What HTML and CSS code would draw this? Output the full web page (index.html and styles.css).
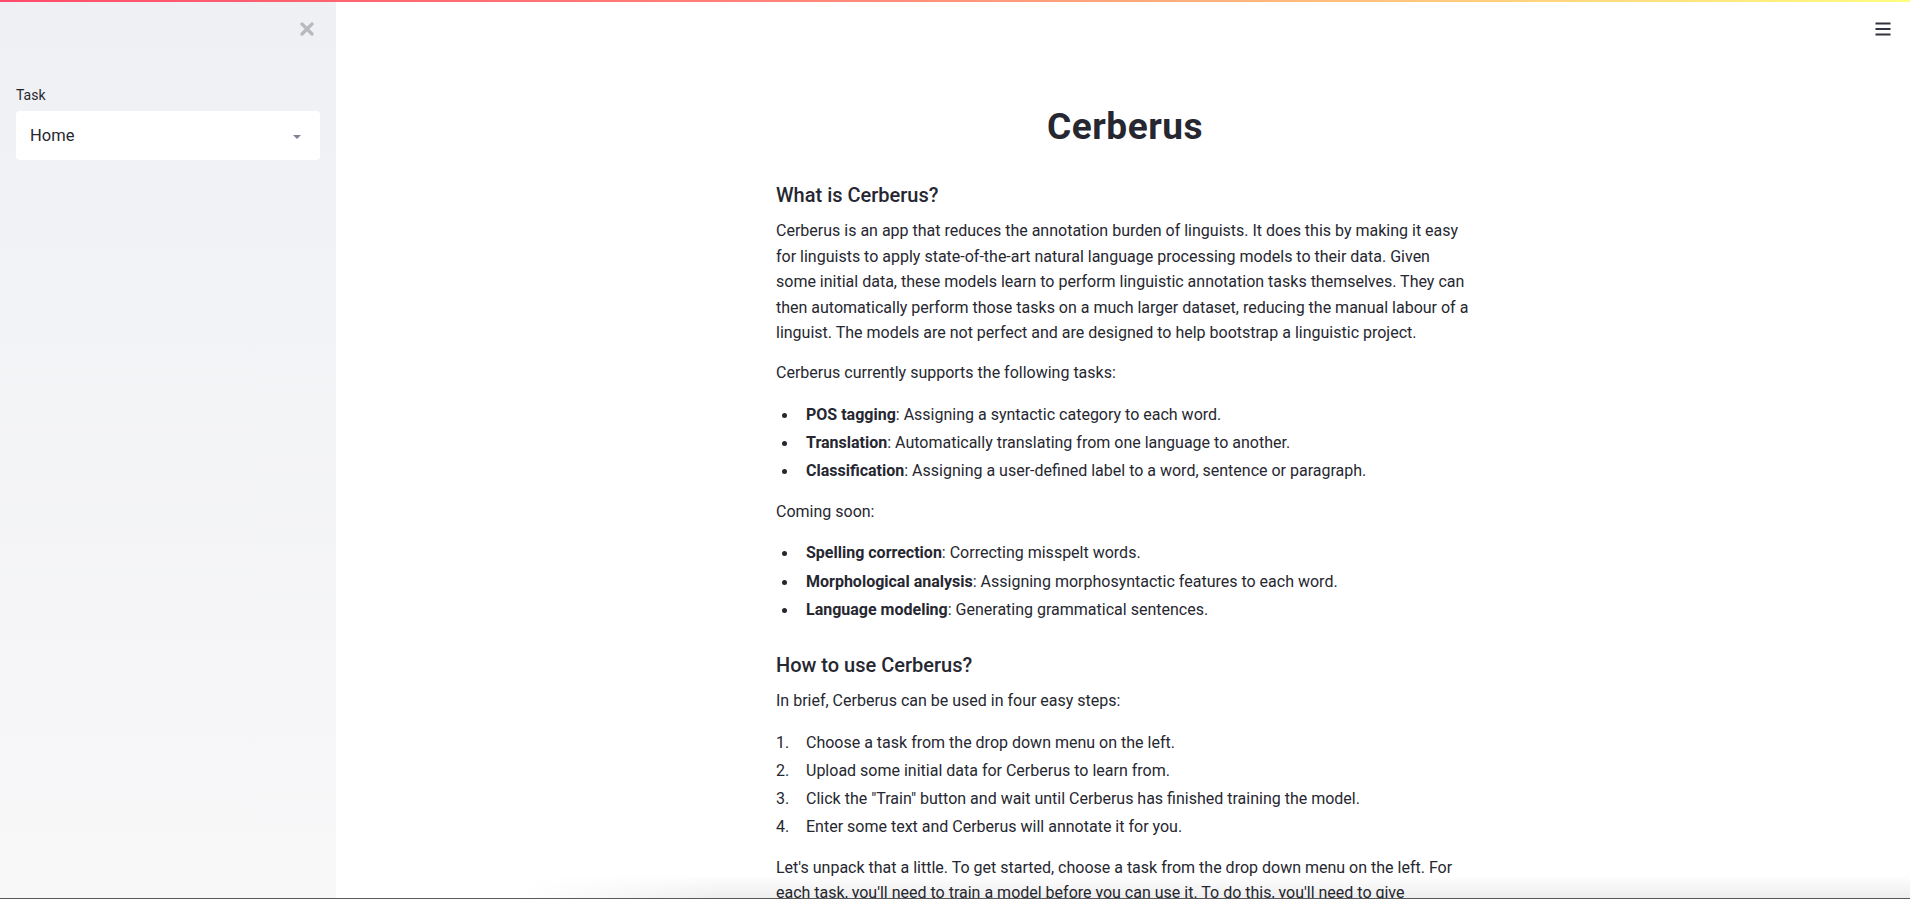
FILE: index.html
```html
<!DOCTYPE html>
<html lang="en">
<head>
<meta charset="utf-8">
<title>Cerberus</title>
<link rel="stylesheet" href="styles.css">
</head>
<body>
<div class="decoration"></div>
<div class="app">
  <aside class="sidebar">
    <div class="sidebar-top">
      <button class="close-btn" aria-label="Close sidebar">
        <svg width="14" height="14" viewBox="0 0 14 14"><path d="M2 2 L12 12 M12 2 L2 12" stroke="#b7b9bf" stroke-width="3.2" stroke-linecap="round"/></svg>
      </button>
    </div>
    <div class="widget">
      <label class="widget-label">Task</label>
      <div class="select">
        <span class="select-value">Home</span>
        <svg class="caret" width="10" height="6" viewBox="0 0 10 6"><path d="M1 1 L9 1 L5 5 Z" fill="#7f8290"/></svg>
      </div>
    </div>
  </aside>
  <main class="main">
    <div class="toolbar">
      <button class="menu-btn" aria-label="Main menu">
        <svg width="16" height="14" viewBox="0 0 16 14"><path d="M0.5 1.5 H15.5 M0.5 7 H15.5 M0.5 12.5 H15.5" stroke="#31333f" stroke-width="2"/></svg>
      </button>
    </div>
    <div class="block">
      <h1 class="title">Cerberus</h1>
      <h3 class="subhead">What is Cerberus?</h3>
      <p class="intro">Cerberus is an app that reduces the annotation burden of linguists. It does this by making it easy<br>
      for linguists to apply state-of-the-art natural language processing models to their data. Given<br>
      some initial data, these models learn to perform linguistic annotation tasks themselves. They can<br>
      then automatically perform those tasks on a much larger dataset, reducing the manual labour of a<br>
      linguist. The models are not perfect and are designed to help bootstrap a linguistic project.</p>
      <p>Cerberus currently supports the following tasks:</p>
      <ul class="bullets">
        <li><strong>POS tagging</strong>: Assigning a syntactic category to each word.</li>
        <li><strong>Translation</strong>: Automatically translating from one language to another.</li>
        <li><strong>Classification</strong>: Assigning a user-defined label to a word, sentence or paragraph.</li>
      </ul>
      <p>Coming soon:</p>
      <ul class="bullets">
        <li><strong>Spelling correction</strong>: Correcting misspelt words.</li>
        <li><strong>Morphological analysis</strong>: Assigning morphosyntactic features to each word.</li>
        <li><strong>Language modeling</strong>: Generating grammatical sentences.</li>
      </ul>
      <h3 class="subhead second">How to use Cerberus?</h3>
      <p>In brief, Cerberus can be used in four easy steps:</p>
      <ol class="steps">
        <li>Choose a task from the drop down menu on the left.</li>
        <li>Upload some initial data for Cerberus to learn from.</li>
        <li>Click the "Train" button and wait until Cerberus has finished training the model.</li>
        <li>Enter some text and Cerberus will annotate it for you.</li>
      </ol>
      <p>Let's unpack that a little. To get started, choose a task from the drop down menu on the left. For<br>
      each task, you'll need to train a model before you can use it. To do this, you'll need to give<br>
      Cerberus some initial data that has already been annotated. Once the model is trained, you can use it to annotate new text.</p>
    </div>
  </main>
</div>
<div class="bottom-shadow"></div>
<div class="window-edge"></div>
</body>
</html>
```

FILE: styles.css
```css
* { box-sizing: border-box; }

html, body {
  margin: 0;
  padding: 0;
  height: 100%;
  overflow: hidden;
  background: #ffffff;
  font-family: Roboto, "Liberation Sans", sans-serif;
  color: #262730;
}

.decoration {
  position: fixed;
  top: 0;
  left: 0;
  right: 0;
  height: 2px;
  background: linear-gradient(90deg, #ff4b6b, #ff8a7a 45%, #fffd80);
  z-index: 10;
}

.app {
  display: flex;
  height: 100vh;
}

.sidebar {
  width: 336px;
  flex: 0 0 336px;
  background: linear-gradient(180deg, #eff0f4 0%, #f8f8f9 100%);
  padding: 0 16px;
}

.sidebar-top {
  display: flex;
  justify-content: flex-end;
  align-items: flex-start;
  padding-top: 22px;
  padding-right: 6px;
  height: 87px;
}

.close-btn, .menu-btn {
  border: 0;
  background: none;
  padding: 0;
  display: block;
  line-height: 0;
}

.widget-label {
  display: block;
  font-size: 14px;
  line-height: 16px;
  margin-bottom: 8px;
  color: #262730;
}

.select {
  height: 49px;
  background: #ffffff;
  border-radius: 4px;
  display: flex;
  align-items: center;
  justify-content: space-between;
  padding: 0 18px 0 14px;
}

.select-value {
  font-size: 16.5px;
  color: #262730;
}

.caret { margin-top: 2px; }

.main {
  flex: 1;
  position: relative;
  padding-left: 10px;
}

.toolbar {
  position: absolute;
  top: 22px;
  right: 19px;
}

.block {
  width: 704px;
  margin: 0 auto;
  padding-top: 105px;
  font-size: 16px;
  line-height: 25.6px;
}

.title {
  font-size: 37px;
  line-height: 43px;
  font-weight: 700;
  text-align: center;
  margin: 0 0 35px;
  padding-right: 6px;
  color: #262730;
  letter-spacing: 0.5px;
}

.subhead {
  font-size: 20px;
  line-height: 24px;
  font-weight: 500;
  margin: 0 0 11px;
}

.subhead.second { margin-top: 31px; }

p { margin: 0 0 16px; }
.intro { margin-bottom: 14.5px; }

ul, ol {
  list-style: none;
  margin: 0 0 15px;
  padding: 0;
}

li {
  position: relative;
  padding-left: 30px;
  margin-bottom: 2.5px;
}

.bullets li::before {
  content: "";
  position: absolute;
  left: 6px;
  top: 11px;
  width: 5px;
  height: 5px;
  border-radius: 50%;
  background: #262730;
}

.steps { counter-reset: step; }
.steps li { counter-increment: step; }
.steps li::before {
  content: counter(step) ".";
  position: absolute;
  left: 0;
  top: 0;
}

strong { font-weight: 700; }

.bottom-shadow {
  position: fixed;
  left: 520px;
  right: 0;
  bottom: 0;
  height: 24px;
  background: linear-gradient(180deg, rgba(0,0,0,0) 0%, rgba(0,0,0,0.07) 100%);
  -webkit-mask-image: linear-gradient(90deg, transparent 0, #000 200px);
  mask-image: linear-gradient(90deg, transparent 0, #000 200px);
  pointer-events: none;
}

.window-edge {
  position: fixed;
  left: 0;
  right: 0;
  bottom: 0;
  height: 1px;
  background: #5a5a5a;
}
```
